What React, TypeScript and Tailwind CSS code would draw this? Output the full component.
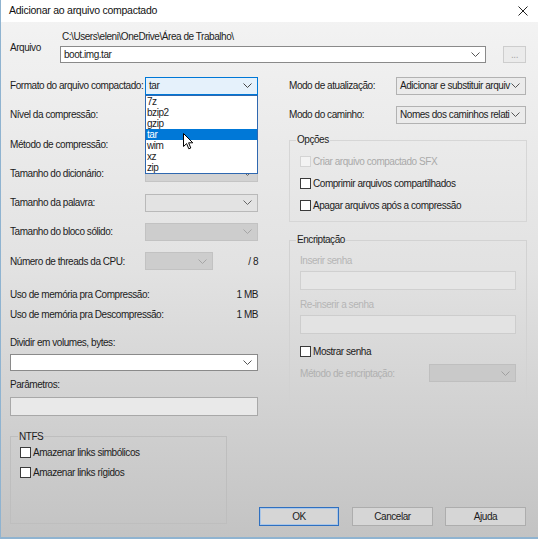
import React from "react";

const Chevron = ({ color = "#555" }: { color?: string }) => (
  <svg width="9" height="5" viewBox="0 0 9 5" className="shrink-0">
    <polyline points="0.5,0.5 4.5,4.5 8.5,0.5" fill="none" stroke={color} strokeWidth="1" />
  </svg>
);

function Combo({
  className,
  text,
  chevron = "#555",
}: {
  className: string;
  text?: string;
  chevron?: string;
}) {
  return (
    <div className={`flex items-center justify-between pl-[3px] pr-[5px] border ${className}`}>
      <span className="whitespace-nowrap">{text ?? ""}</span>
      <Chevron color={chevron} />
    </div>
  );
}

const Box = ({ disabled }: { disabled?: boolean }) =>
  disabled ? (
    <span className="block w-[11px] h-[11px] border border-[#d4d4d4] bg-[#f3f3f3] shrink-0" />
  ) : (
    <span className="block w-[11px] h-[11px] border border-[#3a3a3a] bg-white shrink-0" />
  );

const Cursor = () => (
  <svg width="11" height="17" viewBox="0 0 11 17" className="absolute left-[182px] top-[133px] z-20">
    <polygon
      points="0.5,0.5 0.5,13.5 3.6,10.6 5.8,15.8 7.8,15 5.6,9.8 9.8,9.8"
      fill="#ffffff"
      stroke="#000000"
      strokeWidth="1"
      strokeLinejoin="round"
    />
  </svg>
);

export default function App() {
  const formats = ["7z", "bzip2", "gzip", "tar", "wim", "xz", "zip"];
  return (
    <div className="w-[538px] h-[539px] overflow-hidden relative bg-gradient-to-b from-[#f4f4f4] via-[#e2e2e2] to-[#c3c3c3] border-l border-b-2 border-[#8fb3d0] text-[10px] tracking-[-0.45px] text-[#1c1c1c] font-['Liberation_Sans',Arial,sans-serif]">
      {/* Title bar */}
      <div className="h-[22px] bg-white flex items-center justify-between pl-[8px] pr-[10px]">
        <span className="text-[10.5px] tracking-[-0.25px] text-[#111]">Adicionar ao arquivo compactado</span>
        <svg width="10" height="10" viewBox="0 0 10 10">
          <line x1="0.5" y1="0.5" x2="9.5" y2="9.5" stroke="#222" strokeWidth="1" />
          <line x1="9.5" y1="0.5" x2="0.5" y2="9.5" stroke="#222" strokeWidth="1" />
        </svg>
      </div>

      <Cursor />

      <div className="pl-[9px] pr-[11px] pt-[8px]">
        {/* Arquivo */}
        <div className="flex items-center">
          <div className="w-[50px] pt-[2px]">Arquivo</div>
          <div className="flex-1 flex flex-col">
            <div className="h-[14px] leading-[14px] pl-[2px]">C:\Users\eleni\OneDrive\Área de Trabalho\</div>
            <div className="mt-[2px] flex items-center">
              <Combo className="w-[426px] h-[17px] bg-white border-[#8a8a8a]" text="boot.img.tar" chevron="#555" />
              <div className="ml-auto mr-[1px] w-[23px] h-[17px] border border-[#cdcdcd] bg-[#ebebeb] flex items-center justify-center text-[#a8a8a8] leading-none">
                ...
              </div>
            </div>
          </div>
        </div>

        {/* Main columns */}
        <div className="mt-[8px] flex gap-[31px]">
          {/* Left column */}
          <div className="w-[248px] flex flex-col">
            <div className="h-[29.25px] flex items-center justify-between">
              <span>Formato do arquivo compactado:</span>
              <div className="relative w-[113px] z-10">
                <Combo className="w-[113px] h-[18px] bg-[#e5f1fb] border-[#0078d7]" text="tar" chevron="#444" />
                <div className="absolute left-0 top-full w-[113px] bg-white border border-[#2f68b0]">
                  {formats.map((f) =>
                    f === "tar" ? (
                      <div key={f} className="h-[11.1px] leading-[11.1px] pl-[1px] bg-[#0078d7] text-white">
                        {f}
                      </div>
                    ) : (
                      <div key={f} className="h-[11.1px] leading-[11.1px] pl-[1px]">
                        {f}
                      </div>
                    )
                  )}
                </div>
              </div>
            </div>
            <div className="h-[29.25px] flex items-center justify-between">
              <span>Nível da compressão:</span>
              <Combo className="w-[113px] h-[18px] bg-[#e6e6e6] border-[#b5b5b5]" />
            </div>
            <div className="h-[29.25px] flex items-center justify-between">
              <span>Método de compressão:</span>
              <Combo className="w-[113px] h-[18px] bg-[#e6e6e6] border-[#b5b5b5]" />
            </div>
            <div className="h-[29.25px] flex items-center justify-between">
              <span>Tamanho do dicionário:</span>
              <Combo className="w-[113px] h-[18px] bg-[#d2d2d2] border-[#c4c4c4]" chevron="#666" />
            </div>
            <div className="h-[29.25px] flex items-center justify-between">
              <span>Tamanho da palavra:</span>
              <Combo className="w-[113px] h-[18px] bg-[#e3e3e3] border-[#b9b9b9]" chevron="#666" />
            </div>
            <div className="h-[29.25px] flex items-center justify-between">
              <span>Tamanho do bloco sólido:</span>
              <Combo className="w-[113px] h-[18px] bg-[#cdcdcd] border-[#c2c2c2]" chevron="#a5a5a5" />
            </div>
            <div className="h-[29.25px] flex items-center">
              <span className="w-[135px]">Número de threads da CPU:</span>
              <Combo className="w-[68px] h-[18px] bg-[#cdcdcd] border-[#c2c2c2]" chevron="#a5a5a5" />
              <span className="flex-1 text-right">/ 8</span>
            </div>

            <div className="mt-[9px] h-[20px] flex items-center justify-between">
              <span>Uso de memória pra Compressão:</span>
              <span>1 MB</span>
            </div>
            <div className="h-[20px] flex items-center justify-between">
              <span>Uso de memória pra Descompressão:</span>
              <span>1 MB</span>
            </div>

            <div className="mt-[11px] h-[14px] leading-[14px]">Dividir em volumes, bytes:</div>
            <Combo className="mt-[4px] w-[248px] h-[17px] bg-white border-[#8a8a8a]" chevron="#555" />
            <div className="mt-[7px] h-[14px] leading-[14px]">Parâmetros:</div>
            <div className="mt-[5px] w-[248px] h-[19px] border border-[#a8a8a8] bg-[#e9e9e9]" />
          </div>

          {/* Right column */}
          <div className="w-[238px] flex flex-col">
            <div className="h-[29px] flex items-center justify-between">
              <span>Modo de atualização:</span>
              <Combo className="mr-[1px] w-[130px] h-[18px] bg-[#ebebeb] border-[#b2b2b2]" text="Adicionar e substituir arquiv" chevron="#555" />
            </div>
            <div className="h-[29px] flex items-center justify-between">
              <span>Modo do caminho:</span>
              <Combo className="mr-[1px] w-[130px] h-[18px] bg-[#ebebeb] border-[#b2b2b2]" text="Nomes dos caminhos relati" chevron="#555" />
            </div>

            <fieldset className="mt-[4px] border border-[#d6d6d6] px-[10px] pb-[5px]">
              <legend className="ml-[-4px] px-[1px] leading-[14px]">Opções</legend>
              <div className="pt-[3px]">
                <div className="h-[22px] flex items-center gap-[2px]">
                  <Box disabled />
                  <span className="text-[#a9a9a9]">Criar arquivo compactado SFX</span>
                </div>
                <div className="h-[22px] flex items-center gap-[2px]">
                  <Box />
                  <span>Comprimir arquivos compartilhados</span>
                </div>
                <div className="h-[22px] flex items-center gap-[2px]">
                  <Box />
                  <span>Apagar arquivos após a compressão</span>
                </div>
              </div>
            </fieldset>

            <fieldset className="mt-[11px] border border-[#d2d2d2] px-[10px] pb-[27px]">
              <legend className="ml-[-4px] px-[1px] leading-[14px]">Encriptação</legend>
              <div className="mt-[7px] h-[14px] leading-[14px] text-[#b5b5b5]">Inserir senha</div>
              <div className="mt-[3px] h-[19px] border border-[#d0d0d0] bg-[#e6e6e6]" />
              <div className="mt-[8px] h-[14px] leading-[14px] text-[#b5b5b5]">Re-inserir a senha</div>
              <div className="mt-[3px] h-[19px] border border-[#cdcdcd] bg-[#e3e3e3]" />
              <div className="mt-[10px] h-[14px] flex items-center gap-[2px]">
                <Box />
                <span>Mostrar senha</span>
              </div>
              <div className="mt-[6px] h-[18px] flex items-center justify-between">
                <span className="text-[#b0b0b0]">Método de encriptação:</span>
                <Combo className="w-[87px] h-[18px] bg-[#c9c9c9] border-[#bfbfbf]" chevron="#a0a0a0" />
              </div>
            </fieldset>
          </div>
        </div>

        {/* Bottom row */}
        <div className="mt-[14px] flex items-start">
          <fieldset className="w-[217px] h-[94px] border border-[#bebebe] pl-[9px]">
            <legend className="ml-[-2px] px-[1px] leading-[14px]">NTFS</legend>
            <div className="mt-[2px] h-[14px] flex items-center gap-[2px]">
              <Box />
              <span>Amazenar links simbólicos</span>
            </div>
            <div className="mt-[6px] h-[14px] flex items-center gap-[2px]">
              <Box />
              <span>Amazenar links rígidos</span>
            </div>
          </fieldset>
          <div className="ml-[32px] mt-[77px] flex">
            <div className="w-[80px] h-[19px] border border-[#2f70c0] bg-[#d6d6d6] shadow-[inset_0_0_0_1px_#a9c6e8] flex items-center justify-center">
              OK
            </div>
            <div className="ml-[13px] w-[81px] h-[19px] border border-[#adadad] bg-[#d6d6d6] flex items-center justify-center">
              Cancelar
            </div>
            <div className="ml-[12px] w-[81px] h-[19px] border border-[#adadad] bg-[#d6d6d6] flex items-center justify-center">
              Ajuda
            </div>
          </div>
        </div>
      </div>
    </div>
  );
}
